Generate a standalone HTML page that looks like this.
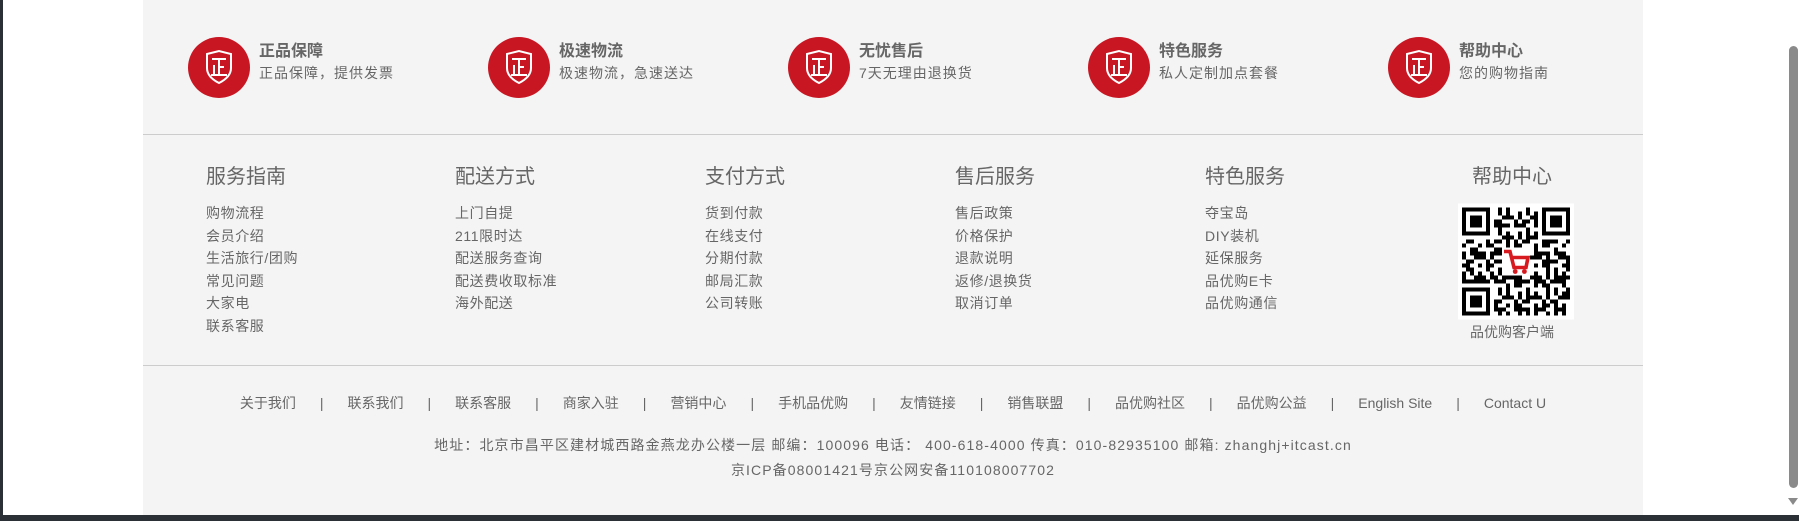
<!DOCTYPE html>
<html><head><meta charset="utf-8">
<style>
*{margin:0;padding:0;box-sizing:border-box}
html,body{width:1799px;height:521px;overflow:hidden;background:#fff;font-family:"Liberation Sans","Noto Sans CJK SC",sans-serif;color:#666}
.lb{position:absolute;left:0;top:0;width:3px;height:521px;background:#2b2f36}
.bb{position:absolute;left:0;top:515px;width:1799px;height:6px;background:#2b2f36}
.corner{position:absolute;left:3px;top:505px;width:12px;height:10px;background:#fff;border-bottom-left-radius:10px}
.sb{position:absolute;left:1787px;top:0;width:12px;height:515px;background:#fff}
.thumb{position:absolute;left:1789px;top:46px;width:9px;height:442px;background:#8a8a8a;border-radius:5px}
.arr{position:absolute;left:1788px;top:498px;width:0;height:0;border-left:5px solid transparent;border-right:5px solid transparent;border-top:7px solid #8a8a8a}
.wrap{position:absolute;left:143px;top:0;width:1500px;height:515px;background:#f4f4f4}
.feat{position:absolute;top:37px;height:62px}
.circ{position:absolute;left:0;top:0;width:62px;height:61px;border-radius:50%;background:#c81623}
.circ svg{position:absolute;left:0;top:0}
.ft{position:absolute;left:71px;top:0px;font-size:16px;font-weight:bold;white-space:nowrap;color:#666}
.fs{position:absolute;left:71px;top:26px;font-size:14px;white-space:nowrap;color:#666;letter-spacing:1px}
.hr1{position:absolute;left:0;top:134px;width:1500px;height:1px;background:#ccc}
.hr2{position:absolute;left:0;top:365px;width:1500px;height:1px;background:#ccc}
.col{position:absolute;top:164px}
.col h3{font-size:20px;font-weight:normal;line-height:26px;color:#666;margin-bottom:12px}
.col a{display:block;font-size:14px;line-height:22.6px;color:#666;text-decoration:none;white-space:nowrap;letter-spacing:0.6px}
.links{position:absolute;left:0;top:393px;width:1500px;text-align:center;font-size:14px;line-height:20px;white-space:nowrap}
.links span.s{margin:0 24px}
.addr{position:absolute;left:0;top:433px;width:1500px;text-align:center;font-size:14px;line-height:25px;letter-spacing:1.1px}
</style></head><body>
<div class="wrap">
  <div class="feat" style="left:45px"><div class="circ"><svg width="62" height="61" viewBox="0 0 62 61"><path d="M19 17 L31 14 L43 17 L43 31 Q43 40 31 46 Q19 40 19 31 Z" fill="none" stroke="#fff" stroke-width="2"/><path d="M24 22 H38 M31 22 V38 M31 30 H36 M26 28 V38 M23 38 H39" fill="none" stroke="#fff" stroke-width="2"/></svg></div><div class="ft">正品保障</div><div class="fs">正品保障，提供发票</div></div>
  <div class="feat" style="left:345px"><div class="circ"><svg width="62" height="61" viewBox="0 0 62 61"><path d="M19 17 L31 14 L43 17 L43 31 Q43 40 31 46 Q19 40 19 31 Z" fill="none" stroke="#fff" stroke-width="2"/><path d="M24 22 H38 M31 22 V38 M31 30 H36 M26 28 V38 M23 38 H39" fill="none" stroke="#fff" stroke-width="2"/></svg></div><div class="ft">极速物流</div><div class="fs">极速物流，急速送达</div></div>
  <div class="feat" style="left:645px"><div class="circ"><svg width="62" height="61" viewBox="0 0 62 61"><path d="M19 17 L31 14 L43 17 L43 31 Q43 40 31 46 Q19 40 19 31 Z" fill="none" stroke="#fff" stroke-width="2"/><path d="M24 22 H38 M31 22 V38 M31 30 H36 M26 28 V38 M23 38 H39" fill="none" stroke="#fff" stroke-width="2"/></svg></div><div class="ft">无忧售后</div><div class="fs">7天无理由退换货</div></div>
  <div class="feat" style="left:945px"><div class="circ"><svg width="62" height="61" viewBox="0 0 62 61"><path d="M19 17 L31 14 L43 17 L43 31 Q43 40 31 46 Q19 40 19 31 Z" fill="none" stroke="#fff" stroke-width="2"/><path d="M24 22 H38 M31 22 V38 M31 30 H36 M26 28 V38 M23 38 H39" fill="none" stroke="#fff" stroke-width="2"/></svg></div><div class="ft">特色服务</div><div class="fs">私人定制加点套餐</div></div>
  <div class="feat" style="left:1245px"><div class="circ"><svg width="62" height="61" viewBox="0 0 62 61"><path d="M19 17 L31 14 L43 17 L43 31 Q43 40 31 46 Q19 40 19 31 Z" fill="none" stroke="#fff" stroke-width="2"/><path d="M24 22 H38 M31 22 V38 M31 30 H36 M26 28 V38 M23 38 H39" fill="none" stroke="#fff" stroke-width="2"/></svg></div><div class="ft">帮助中心</div><div class="fs">您的购物指南</div></div>
  <div class="hr1"></div>

  <div class="col" style="left:63px"><h3>服务指南</h3><a>购物流程</a><a>会员介绍</a><a>生活旅行/团购</a><a>常见问题</a><a>大家电</a><a>联系客服</a></div>
  <div class="col" style="left:312px"><h3>配送方式</h3><a>上门自提</a><a>211限时达</a><a>配送服务查询</a><a>配送费收取标准</a><a>海外配送</a></div>
  <div class="col" style="left:562px"><h3>支付方式</h3><a>货到付款</a><a>在线支付</a><a>分期付款</a><a>邮局汇款</a><a>公司转账</a></div>
  <div class="col" style="left:812px"><h3>售后服务</h3><a>售后政策</a><a>价格保护</a><a>退款说明</a><a>返修/退换货</a><a>取消订单</a></div>
  <div class="col" style="left:1062px"><h3>特色服务</h3><a>夺宝岛</a><a>DIY装机</a><a>延保服务</a><a>品优购E卡</a><a>品优购通信</a></div>
  <div class="col" style="left:1329px;width:80px;text-align:center"><h3>帮助中心</h3></div>
  <svg style="position:absolute;left:1315px;top:203px" width="116" height="117" viewBox="0 0 29 29">
    <defs><pattern id="p" width="7" height="5" patternUnits="userSpaceOnUse"><rect width="7" height="5" fill="#fff"/><rect x="0" y="0" width="2" height="1" fill="#000"/><rect x="3" y="1" width="1" height="2" fill="#000"/><rect x="5" y="0" width="1" height="1" fill="#000"/><rect x="1" y="2" width="1" height="2" fill="#000"/><rect x="4" y="3" width="3" height="1" fill="#000"/><rect x="0" y="4" width="1" height="1" fill="#000"/><rect x="5" y="2" width="1" height="1" fill="#000"/><rect x="2" y="4" width="2" height="1" fill="#000"/></pattern>
    <pattern id="q" width="5" height="7" patternUnits="userSpaceOnUse"><rect x="2" y="0" width="1" height="3" fill="#000"/><rect x="0" y="5" width="2" height="1" fill="#000"/><rect x="4" y="4" width="1" height="2" fill="#000"/></pattern></defs>
    <rect width="29" height="29" fill="#fff"/>
    <rect x="1" y="1" width="27" height="27" fill="url(#p)"/>
    <rect x="1" y="1" width="27" height="27" fill="url(#q)"/>
    <g fill="#fff"><rect x="0" y="0" width="9" height="9"/><rect x="20" y="0" width="9" height="9"/><rect x="0" y="20" width="9" height="9"/><rect x="11" y="11" width="7" height="7"/></g>
    <g fill="none" stroke="#000"><rect x="1.5" y="1.5" width="6" height="6"/><rect x="21.5" y="1.5" width="6" height="6"/><rect x="1.5" y="21.5" width="6" height="6"/></g>
    <g fill="#000"><rect x="3" y="3" width="3" height="3"/><rect x="23" y="3" width="3" height="3"/><rect x="3" y="23" width="3" height="3"/></g>
    <path d="M11.5 12 H13 L14 16 H17 L17.5 13.5 H13.5" fill="none" stroke="#d71920" stroke-width="0.9"/>
    <circle cx="14.3" cy="17" r="0.6" fill="#d71920"/><circle cx="16.6" cy="17" r="0.6" fill="#d71920"/>
  </svg>
  <div style="position:absolute;left:1299px;top:322px;width:140px;text-align:center;font-size:14px;line-height:20px">品优购客户端</div>
  <div class="hr2"></div>

  <div class="links">关于我们<span class="s">|</span>联系我们<span class="s">|</span>联系客服<span class="s">|</span>商家入驻<span class="s">|</span>营销中心<span class="s">|</span>手机品优购<span class="s">|</span>友情链接<span class="s">|</span>销售联盟<span class="s">|</span>品优购社区<span class="s">|</span>品优购公益<span class="s">|</span>English Site<span class="s">|</span>Contact U</div>
  <div class="addr">地址：北京市昌平区建材城西路金燕龙办公楼一层 邮编：100096 电话： 400-618-4000 传真：010-82935100 邮箱: zhanghj+itcast.cn<br>京ICP备08001421号京公网安备110108007702</div>
</div>
<div class="lb"></div>
<div class="sb"></div><div class="thumb"></div><div class="arr"></div>
<div class="bb"></div><div class="corner"></div>
</body></html>
